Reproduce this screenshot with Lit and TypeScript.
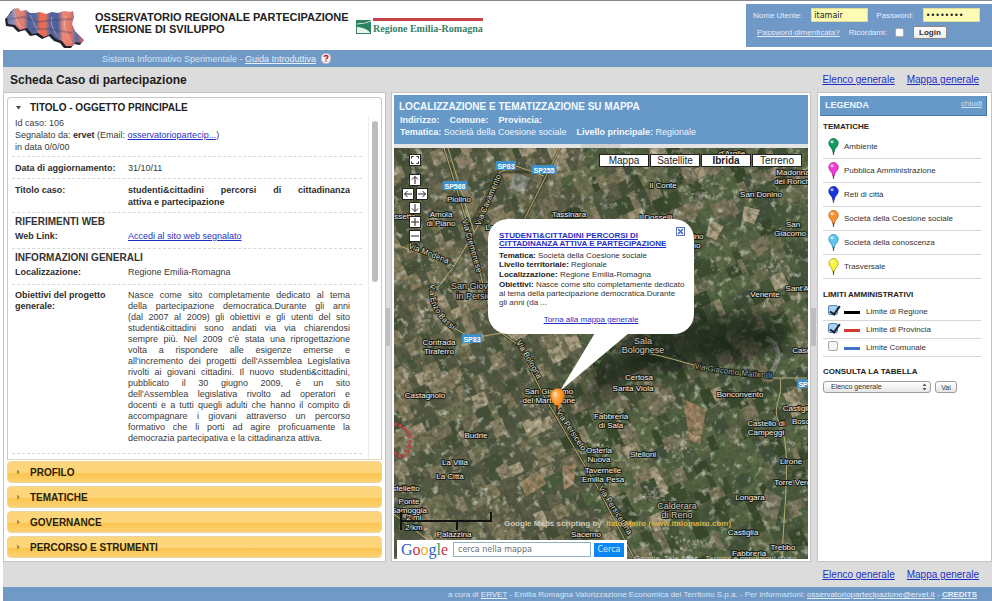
import { LitElement, html, svg, css } from "lit";
import { customElement } from "lit/decorators.js";

/* ---------- data ---------- */

const THEMES = [
  { name: "Ambiente", color: "#0f9d5f", dark: "#06643a" },
  { name: "Pubblica Amministrazione", color: "#f23ad8", dark: "#9d1489" },
  { name: "Reti di città", color: "#1a35e0", dark: "#0a1688" },
  { name: "Società della Coesione sociale", color: "#fb9430", dark: "#a85208" },
  { name: "Società della conoscenza", color: "#5cc6f5", dark: "#2680ac" },
  { name: "Trasversale", color: "#fbf23c", dark: "#a39a14" },
];

const LIMITS = [
  { id: "regione", name: "Limite di Regione", cls: "regione", on: true },
  { id: "provincia", name: "Limite di Provincia", cls: "provincia", on: true },
  { id: "comune", name: "Limite Comunale", cls: "comune", on: false },
];

const GOALS = [
  "Nasce come sito completamente dedicato al tema",
  "della partecipazione democratica.Durante gli anni",
  "(dal 2007 al 2009) gli obiettivi e gli utenti del sito",
  "studenti&cittadini sono andati via via chiarendosi",
  "sempre più. Nel 2009 c'è stata una riprogettazione",
  "volta a rispondere alle esigenze emerse e",
  "all'incremento dei progetti dell'Assemblea Legislativa",
  "rivolti ai giovani cittadini. Il nuovo studenti&cittadini,",
  "pubblicato il 30 giugno 2009, è un sito",
  "dell'Assemblea legislativa rivolto ad operatori e",
  "docenti e a tutti quegli adulti che hanno il compito di",
  "accompagnare i giovani attraverso un percorso",
  "formativo che li porti ad agire proficuamente la",
  "democrazia partecipativa e la cittadinanza attiva.",
];

type Place = [number, number, string, number?];
const PLACES: Place[] = [
  [65, 54, "Piolino"], [47, 69, "Amola"], [47, 78, "di Piano"], [6, 71, "Bassetta"],
  [175, 69, "Tassinara"], [98, 82, "Lov"], [84, 141, "San Giovanni", 9], [86, 151, "in Persiceto", 9],
  [45, 197, "Contrada"], [45, 206, "Tiraferro"], [31, 250, "Castagnolo"], [82, 290, "Budrie"],
  [61, 317, "La Villa"], [56, 331, "La Città"], [12, 343, "stelletto"], [15, 356, "Ponte"], [15, 365, "Samoggia"],
  [60, 389, "Palazzina"], [192, 389, "Sacerno"], [338, 8, "d'Argile"], [269, 40, "Il Conte"],
  [367, 49, "San Donino"], [399, 27, "Madonna"], [399, 36, "dei Ronchi"], [399, 79, "San"], [396, 88, "Giacomo"],
  [262, 72, "I Dosselli"], [302, 91, "nino"], [302, 100, "no"], [371, 149, "Venente"], [411, 143, "Sant'Agata"],
  [249, 196, "Sala", 9], [249, 205, "Bolognese", 9], [245, 232, "Certosa"], [239, 243, "Santa Viola"],
  [346, 249, "Bonconvento"], [412, 205, "Casetta"], [404, 263, "Castiglia"], [409, 276, "Bosco"],
  [372, 278, "Castello di"], [372, 287, "Campeggi"], [155, 246, "San Giacomo"], [155, 255, "del Martignone"],
  [217, 271, "Fabbreria"], [217, 280, "di Sala"], [205, 305, "Osteria"], [205, 314, "Nuova"],
  [209, 325, "Tavernelle"], [209, 334, "Emilia Pesa"], [249, 309, "Stelloni"], [397, 316, "Lirone"],
  [401, 337, "Torre Verde"], [356, 352, "Longara"], [283, 361, "Calderara", 9], [283, 370, "di Reno", 9],
  [349, 387, "Castiglia"], [389, 402, "Trebbo"], [355, 408, "Fabbreria"],
];

const SHIELDS: [number, number, string][] = [
  [112, 18, "SP83"], [150, 22, "SP255"], [61, 38, "SP568"], [78, 191, "SP83"], [413, 236, "SP83"],
];

/* ---------- aerial view ---------- */

function seeded(seed: number) {
  let s = seed;
  return () => {
    s = (s * 1664525 + 1013904223) % 4294967296;
    return s / 4294967296;
  };
}

const WEST = ["#66644f", "#787159", "#575c45", "#857b60", "#4d553f", "#737357", "#454f38", "#8f836a", "#605f4a", "#555944"];
const EAST = ["#45573a", "#526342", "#3b4c2f", "#5e6b49", "#4c5a3f", "#6d6f52", "#34442b", "#576744", "#41503a", "#7f775e"];

function fields() {
  const rnd = seeded(77);
  const out = [];
  for (let v = -420; v < 900; v += 15) {
    let u = -300;
    while (u < 1100) {
      const w = 5 + rnd() * 13;
      const h = 13 + rnd() * 9;
      const a = 0.42;
      const x = u * Math.cos(a) + v * Math.sin(a);
      const y = -u * Math.sin(a) + v * Math.cos(a);
      const pick = rnd();
      const shade = rnd();
      const off = rnd() * 8;
      if (x > -30 && x < 900 && y > -30 && y < 640) {
        const set = x + (rnd() - 0.5) * 120 > 190 ? EAST : WEST;
        const fill = shade > 0.975 ? "#a89a7e" : set[Math.floor(pick * set.length)];
        out.push(svg`<rect x=${u.toFixed(1)} y=${(v + off).toFixed(1)} width=${w.toFixed(1)} height=${h.toFixed(1)} fill=${fill}></rect>`);
      }
      u += w;
    }
  }
  return out;
}

function towns() {
  const rnd = seeded(19);
  const spots = [[72, 125, 26, 34], [285, 300, 18, 20], [258, 345, 20, 12], [300, 40, 24, 20], [28, 170, 12, 20], [90, 348, 22, 12], [140, 255, 14, 10], [205, 300, 10, 16], [380, 120, 14, 16], [10, 300, 10, 40], [300, 395, 24, 10]];
  const tones = ["#a8a396", "#8f8b7d", "#c2bdb0", "#777565"];
  const out = [];
  for (const [cx, cy, rx, ry] of spots) {
    for (let i = 0; i < 46; i++) {
      const x = cx + (rnd() + rnd() - 1) * rx;
      const y = cy + (rnd() + rnd() - 1) * ry;
      out.push(svg`<rect x=${x.toFixed(1)} y=${y.toFixed(1)} width=${(1 + rnd() * 3).toFixed(1)} height=${(1 + rnd() * 2.5).toFixed(1)} fill=${tones[i % 4]} opacity="0.65"></rect>`);
    }
  }
  return out;
}

const aerial = html`
  <svg class="aerial" aria-label="Mappa satellitare di San Giacomo del Martignone" role="img">
    <defs>
      <filter id="grain" x="0" y="0" width="100%" height="100%">
        <feTurbulence type="fractalNoise" baseFrequency="0.19" numOctaves="2" seed="5"></feTurbulence>
        <feColorMatrix values="0 0 0 0 0.05  0 0 0 0 0.07  0 0 0 0 0.03  1.5 0 0 0 -0.55"></feColorMatrix>
      </filter>
      <filter id="glint" x="0" y="0" width="100%" height="100%">
        <feTurbulence type="fractalNoise" baseFrequency="0.13" numOctaves="3" seed="12"></feTurbulence>
        <feColorMatrix values="0 0 0 0 0.74  0 0 0 0 0.71  0 0 0 0 0.6  0 2.2 0 0 -1.25"></feColorMatrix>
      </filter>
      <filter id="haze" x="-30%" y="-60%" width="160%" height="220%"><feGaussianBlur stdDeviation="9"></feGaussianBlur></filter>
      <filter id="soft"><feGaussianBlur stdDeviation="0.6"></feGaussianBlur></filter>
      <radialGradient id="orange" cx="40%" cy="30%" r="75%">
        <stop offset="0" stop-color="#ffc27a"></stop><stop offset="0.5" stop-color="#ff9426"></stop><stop offset="1" stop-color="#e06c00"></stop>
      </radialGradient>
      <path id="r1" d="M68 72 L90 150"></path>
      <path id="r2" d="M86 78 L108 26"></path>
      <path id="r3" d="M14 100 L60 118"></path>
      <path id="r4" d="M36 136 C34 158 42 170 66 188"></path>
      <path id="r5" d="M122 194 L150 242"></path>
      <path id="r6" d="M162 264 L190 306"></path>
      <path id="r7" d="M204 340 L240 396"></path>
      <path id="r8" d="M300 220 C322 225 345 228 390 231"></path>
    </defs>
    <rect width="100%" height="100%" fill="#565c45"></rect>
    <g filter="url(#soft)">
      <g transform="rotate(-24)">${fields()}</g>
      ${towns()}
      <path d="M288 250 L312 262 306 296 296 292Z" fill="#a08262"></path>
      <path d="M126 334 L146 322 152 336 132 348Z" fill="#a08565"></path>
      <path d="M168 318 L182 316 180 336 170 342Z" fill="#a4876a"></path>
      <path d="M316 72 L330 78 322 92 312 88Z M350 58 L366 62 360 76 348 72Z" fill="#b3a387"></path>
      <path d="M120 24 L136 30 130 46 116 40Z" fill="#8f938a"></path>
      <path d="M372 340 L388 350 382 376 366 362Z" fill="#7c7864"></path>
      <path d="M372 190 C386 196 388 212 376 226" fill="none" stroke="#94958d" stroke-width="5"></path>
    </g>
    <rect width="100%" height="100%" filter="url(#grain)"></rect>
    <rect width="100%" height="100%" filter="url(#glint)"></rect>
    <path d="M172 262 L225 196 C260 160 390 152 394 186 C398 220 280 216 225 234Z" fill="#0d140b" opacity="0.62" filter="url(#haze)"></path>

    <g fill="none" stroke="#34361f" stroke-width="3" opacity="0.6">
      <path d="M50 0 L76 84 100 180 123 196 150 248 178 296 205 342 240 410"></path>
      <path d="M72 84 L106 24 150 24 M128 76 L166 0"></path>
    </g>
    <g fill="none" stroke="#b5ad72" stroke-width="1">
      <path d="M50 0 L76 84 100 180 123 196 150 248 178 296 205 342 240 410"></path>
      <path d="M54 0 L80 84"></path>
      <path d="M60 118 L84 78 106 24 122 18 150 28 M128 76 L166 0"></path>
      <path d="M0 96 L60 118 42 142 C36 164 50 176 78 190 L125 182"></path>
      <path d="M250 205 C280 208 310 226 380 230 L413 230 M386 230 C390 250 376 260 386 276 C398 300 390 360 388 410"></path>
      <path d="M0 366 L34 392 M176 284 L194 300"></path>
    </g>
    <path d="M0 276 C14 278 20 290 14 302 C10 312 4 308 0 304" fill="none" stroke="#c9413c" stroke-width="3" stroke-dasharray="3 2"></path>

    <g class="road">
      <text><textPath href="#r1">Via Cremonese</textPath></text>
      <text><textPath href="#r2">Via Cavamento</textPath></text>
      <text><textPath href="#r3">Via Modena</textPath></text>
      <text><textPath href="#r4">Via Enzo Bassi</textPath></text>
      <text><textPath href="#r5">Via Bologna</textPath></text>
      <text><textPath href="#r6">Via Persiceto</textPath></text>
      <text><textPath href="#r7">Via Persicetana</textPath></text>
      <text class="dim"><textPath href="#r8">Via Giacomo Matteotti</textPath></text>
    </g>
    <g class="place">
      ${PLACES.map(([x, y, n, s]) => svg`<text class=${s ? "big" : ""} x=${x} y=${y}>${n}</text>`)}
    </g>
    ${SHIELDS.map(([x, y, n]) => svg`
      <rect x=${x - n.length * 2.5} y=${y - 5} width=${n.length * 5} height="9" rx="1" fill="#3f8fc8"></rect>
      <text class="shield" x=${x} y=${y + 3}>${n}</text>`)}

    <text class="script" x="110" y="378">Google Maps scripting by</text>
    <text class="script author" x="212" y="378">Italo Mairo (www.italomairo.com)</text>
    <text class="copy" x="240" y="413">Google, Tele Atlas - Termini e condizioni d'uso</text>

    <g fill="none" stroke="#111" stroke-width="2">
      <path d="M7 364 V382 M6 373 H98 M97 364 V374 M63 373 V382"></path>
    </g>
    <text class="place" x="20" y="372">2 mi</text>
    <text class="place" x="20" y="382">2 km</text>

    <path d="M201 185 L235 185 166 243Z" fill="#fff"></path>
    <path d="M163.500 263 C163.500 257 156.500 254 156.500 247.500 A7 7 0 0 1 170.500 247.500 C170.500 254 163.500 257 163.500 263Z" fill="url(#orange)" stroke="#c05c00" stroke-width="0.6"></path>
    <path d="M163 257 V265" stroke="#2b1a08" stroke-width="1.4"></path>
    <ellipse cx="161" cy="246" rx="1.800" ry="2.600" fill="#ffe2bd" opacity="0.7"></ellipse>
  </svg>
`;

const arrow = (d: string) => svg`<svg viewBox="0 0 10 10" width="10" height="10"><path d=${d} fill="none" stroke="#222" stroke-width="1"></path></svg>`;

const pin = (color: string, dark: string) => html`
  <svg class="pin" viewBox="0 0 11 18" width="11" height="18" aria-hidden="true">
    <path d="M5.500 16 L4.200 11.500 C3.400 9.500 .8 8 .8 5.200 A4.700 4.700 0 0 1 10.200 5.200 C10.200 8 7.600 9.500 6.800 11.500Z" fill=${color} stroke=${dark} stroke-width="0.7"></path>
    <path d="M5.500 13 V17" stroke="#555" stroke-width="1"></path>
    <ellipse cx="4" cy="3.800" rx="1.700" ry="1.500" fill="#fff" opacity="0.65"></ellipse>
  </svg>
`;

/* ---------- shared styles ---------- */

const base = css`
  * { box-sizing: border-box; }
  h1, h2, h3, p, ul, dl, dt, dd { margin: 0; padding: 0; }
  ul { list-style: none; }
  button, input, select { font-family: inherit; margin: 0; }
  a { color: #1f2fc4; }
`;

/* ---------- case sheet ---------- */

@customElement("case-sheet")
export class CaseSheet extends LitElement {
  static styles = [base, css`
    :host { display: flex; flex-direction: column; gap: 3px; padding: 4px 3px 3px; background: #fff; border: 1px solid #c4c4c4; color: #3a3a3a; }
    .open { flex: 1; margin-bottom: -2px; border: 1px solid #c8c8c8; border-bottom-color: #e2d9b8; border-radius: 4px 4px 0 0; display: flex; flex-direction: column; }
    .head { display: flex; align-items: center; gap: 8px; width: 100%; border: 0; background: none; padding: 0 7px; height: 19px; font-size: 10px; font-weight: 700; color: #222; text-align: left; }
    .body { flex: 1; display: flex; justify-content: space-between; }
    .scroll { flex: 1; padding-left: 4px; font-size: 9px; line-height: 12px; }
    .bar { width: 13px; margin-left: 6px; border-left: 1px solid #ececec; padding: 4px 3px; }
    .thumb { width: 6px; height: 161px; border-radius: 3px; background: #bdbdbd; }
    .row { border-bottom: 1px dashed #d8d8d8; padding: 5px 3px 4px; }
    .info { padding: 0 3px 3px; }
    .pair { display: grid; grid-template-columns: 113px 1fr; padding-right: 12px; }
    dt, b { font-weight: 700; color: #2e2e2e; }
    .just { display: block; text-align: justify; text-align-last: justify; white-space: nowrap; }
    .just:last-child { text-align-last: left; }
    .section { padding: 0 3px 6px; }
    .section .pair { padding-right: 9px; }
    .section h3 { font-size: 10px; line-height: 17px; color: #333; }
    .goals { padding-bottom: 9px; line-height: 11px; }
    .tab { display: flex; align-items: center; gap: 8px; height: 22px; padding: 0 7px; border: 1px solid #e8d6a2; border-radius: 4px; background: linear-gradient(#fdd67c 0 52%, #fbc54f 56%, #fdd271 100%); font-size: 10px; font-weight: 700; color: #2a2005; text-align: left; }
  `];

  render() {
    return html`
      <section class="open">
        <button class="head" aria-expanded="true">
          <svg width="7" height="6" viewBox="0 0 7 6"><path d="M1 1H6L3.500 4.500Z" fill="#444"></path></svg>
          TITOLO - OGGETTO PRINCIPALE
        </button>
        <div class="body">
          <div class="scroll">
            <div class="row info">
              <p>Id caso: 106</p>
              <p>Segnalato da: <b>ervet</b> (Email: <a href="#">osservatoriopartecip...</a>)</p>
              <p>in data 0/0/00</p>
            </div>
            <dl class="row pair"><dt>Data di aggiornamento:</dt><dd>31/10/11</dd></dl>
            <dl class="row pair">
              <dt>Titolo caso:</dt>
              <dd><b><span class="just">studenti&amp;cittadini percorsi di cittadinanza</span><span class="just">attiva e partecipazione</span></b></dd>
            </dl>
            <div class="row section">
              <h3>RIFERIMENTI WEB</h3>
              <dl class="pair"><dt>Web Link:</dt><dd><a href="#">Accedi al sito web segnalato</a></dd></dl>
            </div>
            <div class="row section">
              <h3>INFORMAZIONI GENERALI</h3>
              <dl class="pair"><dt>Localizzazione:</dt><dd>Regione Emilia-Romagna</dd></dl>
            </div>
            <dl class="row pair goals">
              <dt>Obiettivi del progetto<br />generale:</dt>
              <dd>${GOALS.map((l) => html`<span class="just">${l}</span>`)}</dd>
            </dl>
          </div>
          <div class="bar"><div class="thumb"></div></div>
        </div>
      </section>
      ${["PROFILO", "TEMATICHE", "GOVERNANCE", "PERCORSO E STRUMENTI"].map((t) => html`
        <button class="tab" aria-expanded="false">
          <svg width="7" height="6" viewBox="0 0 7 6"><path d="M2 0.500V5.500L5 3Z" fill="#a08a4e"></path></svg>
          ${t}
        </button>`)}
    `;
  }
}

/* ---------- map panel ---------- */

@customElement("map-panel")
export class MapPanel extends LitElement {
  static styles = [base, css`
    :host { display: flex; flex-direction: column; padding: 2px; background: #fff; border: 1px solid #c4c4c4; min-width: 0; }
    .top { background: #6699c8; color: #eef5fc; padding: 5px 5px 4px; height: 49px; font-size: 9px; line-height: 12px; }
    .top h2 { font-size: 10px; line-height: 14px; color: #f4f9ff; }
    .top b { color: #f4f9ff; }
    .line { display: flex; gap: 10px; padding-left: 1px; }
    .split { height: 4px; background: #e4e4e4; display: flex; justify-content: center; }
    .split i { width: 40px; background: #cfcfcf; }
    .map { position: relative; flex: 1; overflow: hidden; background: #4c523c; }
    .aerial { position: absolute; inset: 0; width: 100%; height: 100%; }
    .place { font-size: 8px; fill: #f2f2f2; text-anchor: middle; stroke: #1b1e14; stroke-width: 2px; paint-order: stroke; }
    .place .big { font-size: 9px; fill: #c9c9c3; }
    .road { font-size: 8px; fill: #e4e4dc; stroke: #1b1e14; stroke-width: 2px; paint-order: stroke; }
    .dim { fill: #a9aaa2; }
    .shield { font-size: 7px; font-weight: 700; fill: #fff; text-anchor: middle; }
    .script { font-size: 8px; font-weight: 700; fill: #c9c9bc; }
    .author { fill: #d8b24a; }
    .copy { font-size: 8px; fill: #c9c9c0; }
    .types { position: absolute; top: 6px; right: 6px; display: flex; gap: 1px; }
    .types button { width: 50px; height: 13px; padding: 0; border: 1px solid #222; background: #fff; font-size: 10px; line-height: 11px; color: #222; }
    .types .on { font-weight: 700; }
    .nav { position: absolute; top: 6px; left: 8px; width: 26px; display: flex; flex-direction: column; align-items: center; gap: 2px; }
    .nav button { width: 12px; height: 12px; padding: 0; border: 1px solid #222; background: #fff; display: flex; align-items: center; justify-content: center; }
    .nav .full { margin-bottom: 6px; }
    .nav div { display: flex; gap: 2px; }
    .balloon { position: absolute; left: 94px; top: 71px; width: 206px; height: 115px; border-radius: 20px; background: #fff; padding: 13px 11px 0; font-size: 8px; line-height: 9px; color: #333; display: flex; flex-direction: column; gap: 1px; white-space: nowrap; }
    .balloon h3 { font-size: 8px; line-height: 8px; padding-bottom: 2px; }
    .balloon b { color: #222; }
    .back { align-self: center; padding-top: 7px; }
    .close { position: absolute; top: 8px; right: 9px; width: 9px; height: 9px; padding: 0; border: 1px solid #5b73c8; background: #fff; display: flex; align-items: center; justify-content: center; }
    .find { position: absolute; left: 3px; bottom: 0; height: 19px; display: flex; align-items: center; gap: 3px; background: #fff; padding: 0 3px 0 4px; }
    .logo { font-family: "Liberation Serif", serif; font-size: 16px; line-height: 18px; width: 49px; }
    .g1 { color: #2f5fc4; } .g2 { color: #cf2f3f; } .g3 { color: #e9b41c; } .g4 { color: #1f9c5a; }
    .find input { width: 138px; height: 15px; border: 1px solid #8fb2ba; padding: 0 4px; font-family: "DejaVu Sans", sans-serif; font-size: 8px; color: #555; background: #fff; }
    .find input::placeholder { color: #6c6c6c; }
    .find button { width: 30px; height: 14px; border: 0; padding: 0; background: #0b86f2; color: #d9efff; font-family: "DejaVu Sans", sans-serif; font-size: 8px; }
  `];

  render() {
    return html`
      <header class="top">
        <h2>LOCALIZZAZIONE E TEMATIZZAZIONE SU MAPPA</h2>
        <div class="line"><b>Indirizzo:</b><b>Comune:</b><b>Provincia:</b></div>
        <div class="line">
          <span><b>Tematica:</b> Società della Coesione sociale</span>
          <span><b>Livello principale:</b> Regionale</span>
        </div>
      </header>
      <div class="split"><i></i></div>
      <div class="map">
        ${aerial}
        <div class="types">
          <button>Mappa</button><button>Satellite</button><button class="on">Ibrida</button><button>Terreno</button>
        </div>
        <div class="nav">
          <button class="full" aria-label="Schermo intero">${arrow("M1.500 3.500V1.500H3.500 M6.500 1.500H8.500V3.500 M8.500 6.500V8.500H6.500 M3.500 8.500H1.500V6.500")}</button>
          <button aria-label="Su">${arrow("M5 9V1.500 M2 4.500L5 1.500 8 4.500")}</button>
          <div>
            <button aria-label="Sinistra">${arrow("M9 5H1.500 M4.500 2L1.500 5 4.500 8")}</button>
            <button aria-label="Destra">${arrow("M1 5H8.500 M5.500 2L8.500 5 5.500 8")}</button>
          </div>
          <button aria-label="Giù">${arrow("M5 1V8.500 M2 5.500L5 8.500 8 5.500")}</button>
          <button aria-label="Ingrandisci">${arrow("M5 1V9 M1 5H9")}</button>
          <button aria-label="Riduci">${arrow("M1 5H9")}</button>
        </div>
        <article class="balloon">
          <h3><a href="#">STUDENTI&amp;CITTADINI PERCORSI DI<br />CITTADINANZA ATTIVA E PARTECIPAZIONE</a></h3>
          <p><b>Tematica:</b> Società della Coesione sociale<br /><b>Livello territoriale:</b> Regionale</p>
          <p><b>Localizzazione:</b> Regione Emilia-Romagna</p>
          <p><b>Obiettivi:</b> Nasce come sito completamente dedicato<br />al tema della partecipazione democratica.Durante<br />gli anni (da ...</p>
          <p class="back"><a href="#">Torna alla mappa generale</a></p>
          <button class="close" aria-label="Chiudi">
            <svg width="7" height="7" viewBox="0 0 7 7"><path d="M1 1L6 6M6 1L1 6" stroke="#3b55b8" stroke-width="1.200"></path></svg>
          </button>
        </article>
        <form class="find" @submit=${(e: Event) => e.preventDefault()}>
          <span class="logo"><span class="g1">G</span><span class="g2">o</span><span class="g3">o</span><span class="g1">g</span><span class="g4">l</span><span class="g2">e</span></span>
          <input type="text" aria-label="cerca nella mappa" placeholder="cerca nella mappa" />
          <button>Cerca</button>
        </form>
      </div>
    `;
  }
}

/* ---------- legend ---------- */

@customElement("map-legend")
export class MapLegend extends LitElement {
  static styles = [base, css`
    :host { display: block; background: #fff; border: 1px solid #c4c4c4; padding: 3px 4px 0 2px; font-size: 8px; color: #333; }
    .top { display: flex; justify-content: space-between; height: 20px; padding: 3px 4px 0 5px; background: #6699c8; border-bottom: 1px solid #4b7ba8; border-right: 1px solid #4b7ba8; }
    h2 { font-size: 9px; line-height: 13px; color: #eef6ff; }
    .top a { color: #cfe3f6; line-height: 10px; }
    .in { padding: 5px 6px 0 3px; }
    h3 { font-size: 8px; line-height: 12px; color: #222; }
    .themes { padding-top: 2px; }
    .themes li { display: flex; align-items: center; gap: 5px; height: 24px; padding-left: 5px; border-bottom: 1px solid #d6d6d6; }
    .limits { padding: 10px 0 9px; }
    .limits ul { padding-top: 2px; }
    .limits li { display: flex; align-items: center; height: 18px; padding-left: 5px; border-bottom: 1px solid #d6d6d6; }
    .limits label { display: flex; align-items: center; gap: 6px; }
    .limits input { position: relative; appearance: none; width: 10px; height: 10px; margin-bottom: 4px; border: 1px solid #aaa; border-radius: 2px; background: #f4f4f4; }
    .limits input:checked { border-color: #5b88b8; background: #a9d0f2; }
    .limits input:checked::after { content: ""; position: absolute; left: 3px; top: -2px; width: 4px; height: 9px; border: solid #16233a; border-width: 0 2px 2px 0; transform: rotate(35deg); }
    .swatch { width: 16px; height: 3px; margin-top: 2px; }
    .regione { background: #000; } .provincia { background: #d63a2c; } .comune { background: #3f74cc; }
    form { display: flex; gap: 4px; padding-top: 3px; }
    .sel { position: relative; width: 108px; height: 12px; }
    select { appearance: none; width: 100%; height: 12px; padding: 0 7px; border: 1px solid #9c9c9c; border-radius: 3px; background: linear-gradient(#fff, #e6e6e6); font-size: 7px; line-height: 10px; color: #333; }
    .sel svg { position: absolute; right: 4px; top: 2px; pointer-events: none; }
    form button { width: 22px; height: 12px; padding: 0; border: 1px solid #9c9c9c; border-radius: 3px; background: linear-gradient(#fff, #e6e6e6); font-size: 7px; color: #333; }
  `];

  render() {
    return html`
      <header class="top"><h2>LEGENDA</h2><a href="#">chiudi</a></header>
      <div class="in">
        <h3>TEMATICHE</h3>
        <ul class="themes">
          ${THEMES.map((t) => html`<li>${pin(t.color, t.dark)}<span>${t.name}</span></li>`)}
        </ul>
        <div class="limits">
          <h3>LIMITI AMMINISTRATIVI</h3>
          <ul>
            ${LIMITS.map((l) => html`<li><label for=${l.id}><input type="checkbox" id=${l.id} ?checked=${l.on} /><i class="swatch ${l.cls}"></i>${l.name}</label></li>`)}
          </ul>
        </div>
        <h3>CONSULTA LA TABELLA</h3>
        <form @submit=${(e: Event) => e.preventDefault()}>
          <span class="sel">
            <select aria-label="Consulta la tabella"><option>Elenco generale</option></select>
            <svg width="5" height="8" viewBox="0 0 5 8"><path d="M0.500 3L2.500 .5 4.500 3Z M0.500 5L2.500 7.500 4.500 5Z" fill="#555"></path></svg>
          </span>
          <button>Vai</button>
        </form>
      </div>
    `;
  }
}

/* ---------- page ---------- */

@customElement("app-root")
export class AppRoot extends LitElement {
  static styles = [base, css`
    :host { display: flex; flex-direction: column; min-height: 100vh; padding-left: 3px; border-top: 1px solid #8a8a8a; background: #fff; font-family: "Liberation Sans", Arial, sans-serif; color: #222; }
    .brand { display: flex; justify-content: space-between; height: 49px; }
    .left { display: flex; }
    .shape { margin: 4px 0 0 1px; }
    h1 { font-size: 11px; line-height: 12px; color: #222; margin: 10px 0 0 9px; width: 261px; white-space: nowrap; }
    .region { display: flex; align-items: flex-end; gap: 2px; height: 20px; margin-top: 17px; }
    .region span { border-top: 3px solid #c8434a; font-family: "Liberation Serif", serif; font-size: 10px; line-height: 16px; font-weight: 700; color: #3b8064; height: 20px; }
    .login { width: 246px; height: 43px; margin-top: 3px; padding: 4px 7px 0; background: #7199c8; font-size: 8px; color: #e4eefa; display: flex; flex-direction: column; gap: 4px; }
    .login div { display: flex; align-items: center; }
    .login label { display: flex; align-items: center; gap: 9px; }
    .login label + label { margin-left: 8px; }
    .login .txt { height: 14px; border: 1px solid #dede9a; background: #fcfcb4; font-family: "DejaVu Sans", sans-serif; font-size: 8px; padding: 0 2px; color: #222; width: 57px; }
    .login a { color: #e4eefa; margin: 0 9px 0 4px; }
    .login .mem { gap: 8px; }
    .login .mem input { appearance: none; width: 9px; height: 9px; border: 1px solid #aaa; border-radius: 2px; background: #fff; }
    .login button { width: 34px; height: 13px; margin-left: 9px; padding: 0; border: 1px solid #8a8a8a; border-radius: 2px; background: linear-gradient(#fff, #ececec); font-size: 8px; font-weight: 700; color: #333; }
    .strip { display: flex; align-items: center; gap: 5px; height: 17px; padding-left: 99px; background: #7199c6; font-size: 9px; color: #d6e4f3; }
    .strip a { color: #e6f0fa; }
    .bar { display: flex; justify-content: space-between; align-items: center; height: 25px; padding: 0 13px 0 7px; background: #dcdcdc; }
    .bar h2 { font-size: 12px; line-height: 16px; color: #1c1c1c; }
    .bar nav { display: flex; gap: 12px; margin-left: auto; font-size: 10px; }
    main { flex: 1; display: grid; grid-template-columns: 383px 5px minmax(0, 1fr) 6px 175px; background: #dcdcdc; }
    .grip { align-self: center; height: 38px; margin-right: 1px; background: #bfbfbf; }
    footer { height: 15px; line-height: 15px; padding-right: 15px; text-align: right; background: #7199c6; font-size: 8px; color: #d6e4f3; }
    footer a { color: #e2eefa; }
    footer .credits { font-weight: 700; }
  `];

  render() {
    return html`
      <header class="brand">
        <div class="left">
          <svg class="shape" width="82" height="44" viewBox="0 0 82 44" role="img" aria-label="Emilia-Romagna">
            <defs>
              <linearGradient id="bands" x1="0" x2="1">
                <stop offset="0" stop-color="#5f6fa2"></stop><stop offset="0.08" stop-color="#8b8fb8"></stop><stop offset="0.14" stop-color="#e8836f"></stop>
                <stop offset="0.22" stop-color="#d97c72"></stop><stop offset="0.28" stop-color="#4f5f98"></stop><stop offset="0.38" stop-color="#5a69a0"></stop>
                <stop offset="0.43" stop-color="#ef6a50"></stop><stop offset="0.5" stop-color="#e66d58"></stop><stop offset="0.56" stop-color="#56659c"></stop>
                <stop offset="0.66" stop-color="#4e5f9b"></stop><stop offset="0.73" stop-color="#ef8a74"></stop><stop offset="0.83" stop-color="#e07668"></stop>
                <stop offset="0.9" stop-color="#5a6aa0"></stop><stop offset="1" stop-color="#d9685c"></stop>
              </linearGradient>
              <path id="er" d="M9 4 L14 3 17 6 22 5 26 8 31 8 36 7 42 9 48 7 54 8 60 6 66 7 69 6 70 12 68 19 71 26 76 31 80 35 78 38 72 37 69 41 62 41 58 36 52 34 47 29 40 32 34 28 28 29 23 23 16 25 11 20 4 19 3 12 6 9Z"></path>
            </defs>
            <use href="#er" transform="translate(-2 2)" fill="#20222c"></use>
            <use href="#er" fill="url(#bands)"></use>
            <path d="M10 6 C12 12 12 18 18 23 M26 10 C30 16 30 22 36 28 M48 12 C46 20 50 26 54 32 M62 11 C58 20 62 30 68 38" fill="none" stroke="#f3c3b8" stroke-width="1" opacity="0.55"></path>
            <path d="M6 14 L20 12 34 17 50 15 68 14 M28 24 L46 24 68 28" fill="none" stroke="#2d3c74" stroke-width="2" opacity="0.3"></path>
          </svg>
          <h1>OSSERVATORIO REGIONALE PARTECIPAZIONE<br />VERSIONE DI SVILUPPO</h1>
          <div class="region">
            <svg width="15" height="20" viewBox="0 0 15 20"><rect x="0.500" y="2.500" width="14" height="13" fill="#e9f2ec" stroke="#3f8468"></rect><path d="M0 2 H15 V16 C12 11 6 9 0 9Z" fill="#2b8460"></path><path d="M1 6 L9 5 15 3" stroke="#d8ecdf" stroke-width="1"></path></svg>
            <span>Regione Emilia-Romagna</span>
          </div>
        </div>
        <form class="login" @submit=${(e: Event) => e.preventDefault()}>
          <div>
            <label>Nome Utente: <input class="txt" type="text" value="itamair" /></label>
            <label>Password: <input class="txt" type="password" value="password" /></label>
          </div>
          <div>
            <a href="#">Password dimenticata?</a>
            <label class="mem">Ricordami: <input type="checkbox" /></label>
            <button>Login</button>
          </div>
        </form>
      </header>
      <div class="strip">
        <span>Sistema Informativo Sperimentale - <a href="#">Guida Introduttiva</a></span>
        <svg width="10" height="11" viewBox="0 0 10 11"><rect x="0.500" y="0.500" width="9" height="10" rx="4" fill="#f3eef0" stroke="#c9b9c6"></rect><path d="M3.300 4 C3.300 2 6.800 2 6.800 4 C6.800 5.200 5 5.200 5 6.600 M5 7.600 V8.800" fill="none" stroke="#b02438" stroke-width="1.400"></path></svg>
      </div>
      <div class="bar">
        <h2>Scheda Caso di partecipazione</h2>
        <nav><a href="#">Elenco generale</a><a href="#">Mappa generale</a></nav>
      </div>
      <main>
        <case-sheet></case-sheet>
        <i class="grip"></i>
        <map-panel></map-panel>
        <i class="grip"></i>
        <map-legend></map-legend>
      </main>
      <div class="bar">
        <nav><a href="#">Elenco generale</a><a href="#">Mappa generale</a></nav>
      </div>
      <footer>
        a cura di <a href="#">ERVET</a> - Emilia Romagna Valorizzazione Economica del Territorio S.p.a. - Per informazioni:
        <a href="#">osservatoriopartecipazione@ervet.it</a> - <a class="credits" href="#">CREDITS</a>
      </footer>
    `;
  }
}
